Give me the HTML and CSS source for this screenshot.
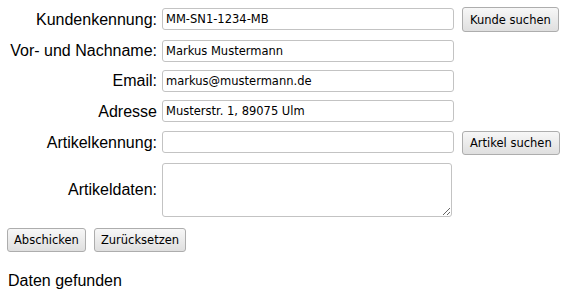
FILE: index.html
```html
<!DOCTYPE html>
<html lang="de">
<head>
<meta charset="utf-8">
<title>Kundendaten</title>
<link rel="stylesheet" href="styles.css">
</head>
<body>
<form class="form">
  <div class="grid">
    <label class="lbl" for="kid">Kundenkennung:</label>
    <input class="field field-first" id="kid" type="text" value="MM-SN1-1234-MB">
    <button class="btn" type="button">Kunde suchen</button>

    <label class="lbl" for="name">Vor- und Nachname:</label>
    <input class="field" id="name" type="text" value="Markus Mustermann">
    <span></span>

    <label class="lbl" for="mail">Email:</label>
    <input class="field" id="mail" type="text" value="markus@mustermann.de">
    <span></span>

    <label class="lbl" for="adr">Adresse</label>
    <input class="field" id="adr" type="text" value="Musterstr. 1, 89075 Ulm">
    <span></span>

    <label class="lbl" for="art">Artikelkennung:</label>
    <input class="field" id="art" type="text" value="">
    <button class="btn btn-short" type="button">Artikel suchen</button>

    <label class="lbl" for="data">Artikeldaten:</label>
    <textarea class="area" id="data"></textarea>
    <span></span>
  </div>
  <div class="actions">
    <button class="btn" type="submit">Abschicken</button>
    <button class="btn" type="reset">Zurücksetzen</button>
  </div>
</form>
<p class="status">Daten gefunden</p>
</body>
</html>
```

FILE: styles.css
```css
html, body {
  margin: 0;
  padding: 0;
  background: #ffffff;
}

body {
  font-family: "Liberation Sans", Arial, sans-serif;
  font-size: 16px;
  color: #000;
}

.form {
  padding: 7px 0 0 7px;
}

.grid {
  display: grid;
  grid-template-columns: 149px 292px auto;
  grid-template-rows: 25px 22px 22px 23px 24px 54px;
  column-gap: 6px;
  row-gap: 8px;
  align-items: start;
  justify-items: start;
}

.lbl {
  align-self: center;
  justify-self: end;
  text-align: right;
  white-space: nowrap;
  line-height: 18px;
  margin-right: -1px;
}

.field,
.area {
  box-sizing: border-box;
  width: 292px;
  height: 22px;
  margin: 0;
  padding: 0 3px;
  border: 1px solid #c3c3c3;
  border-radius: 3px;
  background: #fff;
  font-family: "DejaVu Sans", Verdana, sans-serif;
  font-size: 11.5px;
  color: #000;
  outline: none;
}

.field-first {
  margin-top: 1px;
}

.area {
  width: 290px;
  height: 54px;
  resize: both;
}

.btn {
  box-sizing: border-box;
  height: 25px;
  margin: 0 0 0 2px;
  padding: 0 7px;
  border: 1px solid #adadad;
  border-radius: 3px;
  background: linear-gradient(#f7f7f7, #dfdfdf);
  font-family: "DejaVu Sans", Verdana, sans-serif;
  font-size: 11.5px;
  color: #000;
  white-space: nowrap;
}

.btn-short {
  height: 24px;
}

.actions {
  display: flex;
  gap: 8px;
  margin-top: 11px;
}

.actions .btn {
  height: 24px;
  margin: 0;
  padding: 0 6px;
}

.status {
  margin: 20px 0 0 8px;
  line-height: 18px;
}
```
